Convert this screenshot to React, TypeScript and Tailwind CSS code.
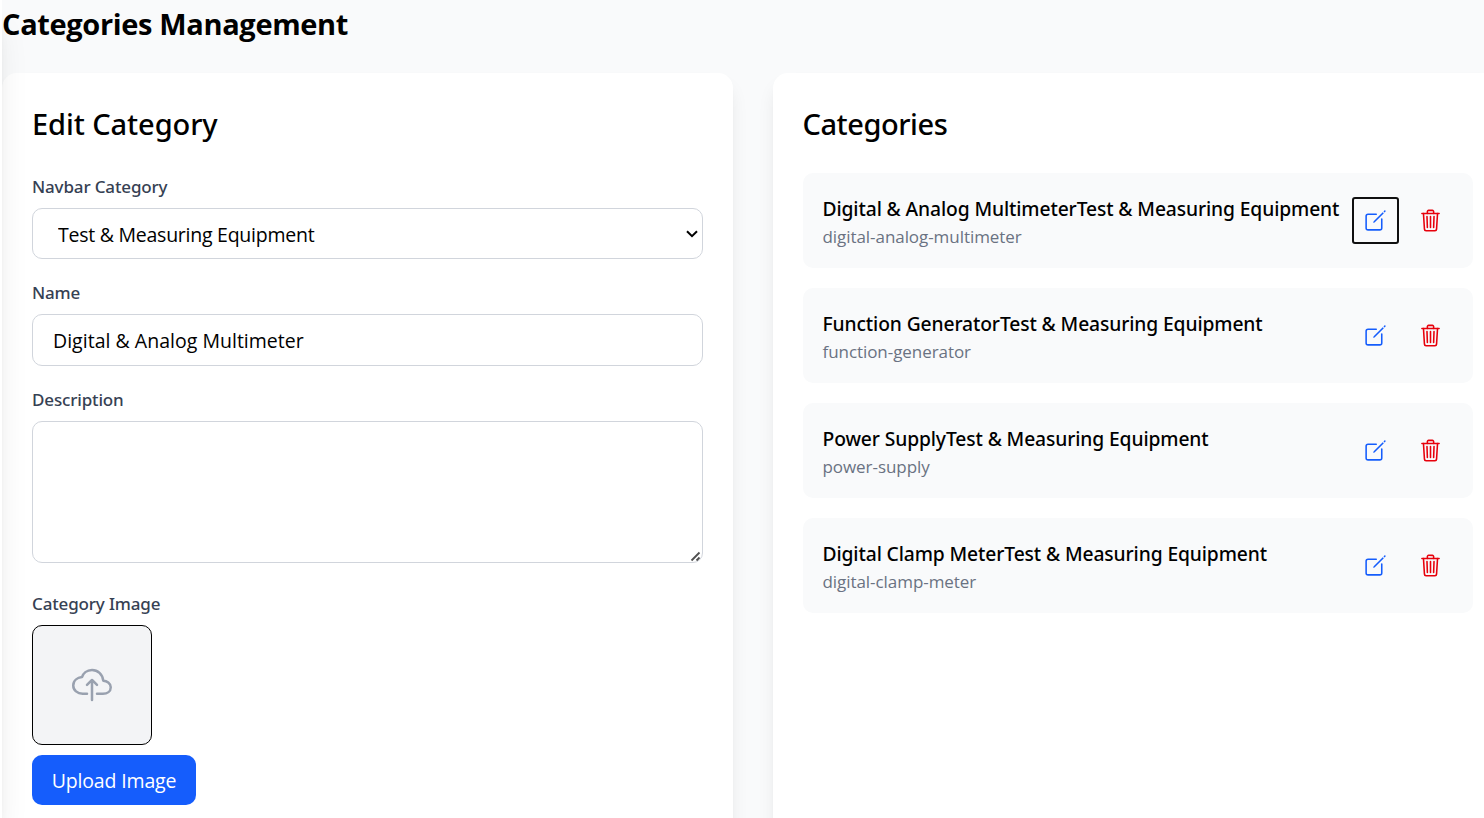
import { useState } from "react";
import { IoCloudUploadOutline, IoCreateOutline, IoTrashOutline } from "react-icons/io5";

const categories = [
  { name: "Digital & Analog Multimeter", parent: "Test & Measuring Equipment", slug: "digital-analog-multimeter" },
  { name: "Function Generator", parent: "Test & Measuring Equipment", slug: "function-generator" },
  { name: "Power Supply", parent: "Test & Measuring Equipment", slug: "power-supply" },
  { name: "Digital Clamp Meter", parent: "Test & Measuring Equipment", slug: "digital-clamp-meter" },
];

const card =
  "w-[730.5px] shrink-0 rounded-[15px] bg-white p-[30px] shadow-[0_12.5px_19px_-4px_rgba(0,0,0,0.1),0_5px_7.5px_-5px_rgba(0,0,0,0.1)]";
const label =
  "mb-[9px] block pt-px font-['Noto_Sans',sans-serif] text-[17px] leading-[25px] font-medium tracking-[-0.15px] text-[#364153]";
const field = "w-full rounded-[10px] border border-[#d1d5dc] bg-white text-[19.5px] leading-[30px] text-black outline-none";

function CategoryForm() {
  const [name, setName] = useState("Digital & Analog Multimeter");
  return (
    <section className={card}>
      <h2 className="mb-[29px] pt-px font-['Noto_Sans',sans-serif] text-[29px] leading-10 font-medium tracking-[-0.08px]">Edit Category</h2>
      <form className="flex flex-col">
        <div className="mb-5">
          <label className={label}>Navbar Category</label>
          <div className="relative h-[51px]">
            <select className={`${field} h-full appearance-none pt-[3px] pr-10 pl-[25px] tracking-[-0.25px]`}>
              <option>Test &amp; Measuring Equipment</option>
            </select>
            <svg className="pointer-events-none absolute top-[22px] right-[5px] h-2 w-3" viewBox="0 0 12 8" fill="none" stroke="black" strokeWidth="2">
              <path d="M1 1.2 6 6.2 11 1.2" />
            </svg>
          </div>
        </div>
        <div className="mb-5">
          <label className={label}>Name</label>
          <input
            className={`${field} block h-[52px] px-5 pt-px tracking-[0.02px]`}
            value={name}
            onChange={(e) => setName(e.target.value)}
          />
        </div>
        <div className="mb-[27px]">
          <label className={label}>Description</label>
          <div className="relative">
            <textarea className={`${field} block h-[142px] resize-none px-5 py-2.5`} />
            <svg className="pointer-events-none absolute right-[2px] bottom-[1px] h-[11px] w-[11px]" viewBox="0 0 11 11" stroke="#505050" strokeWidth="1.8">
              <path d="M1.5 9.5 9.5 1.5M6.5 9.5 9.5 6.5" />
            </svg>
          </div>
        </div>
        <div>
          <label className={label}>Category Image</label>
          <div className="mb-2.5 flex size-[120px] items-center justify-center rounded-[10px] border border-black bg-[#f3f4f6]">
            <IoCloudUploadOutline className="size-10 text-[#99a1af]" />
          </div>
          <button type="button" className="h-[50px] w-[164px] rounded-[10px] bg-[#155dfc] pt-px text-[19.5px] leading-[30px] tracking-[-0.15px] text-white">
            Upload Image
          </button>
        </div>
      </form>
    </section>
  );
}

function CategoryList() {
  return (
    <section className={card}>
      <h2 className="mb-[29px] pt-px font-['Noto_Sans',sans-serif] text-[29px] leading-10 font-medium tracking-[-0.45px]">Categories</h2>
      <ul className="flex flex-col gap-5">
        {categories.map((c, i) => (
          <li key={c.slug} className="flex h-[95px] items-center justify-between rounded-[10px] bg-[#f9fafb] p-5">
            <div className="pt-0.5 whitespace-nowrap">
              <h3 className="font-['Noto_Sans',sans-serif] text-[19.25px] leading-[30px] font-medium tracking-[-0.11px]">
                {c.name}
                {c.parent}
              </h3>
              <p className="text-[17px] leading-[25px] tracking-[-0.06px] text-[#6a7282]">{c.slug}</p>
            </div>
            <div className="flex gap-2.5">
              <button
                aria-label="Edit"
                className={`rounded-[2px] p-2.5 text-[#155dfc] ${i === 0 ? "outline-2 -outline-offset-1 outline-[#101010]" : ""}`}
              >
                <IoCreateOutline className="size-[25px]" />
              </button>
              <button aria-label="Delete" className="p-2.5 text-[#e7000b]">
                <IoTrashOutline className="size-[25px]" />
              </button>
            </div>
          </li>
        ))}
      </ul>
    </section>
  );
}

export default function App() {
  return (
    <div className="flex h-[818px] overflow-hidden bg-white font-['Open_Sans',sans-serif] text-black">
      <aside className="z-10 -ml-[318px] w-80 shrink-0 bg-white shadow-[0_25px_31px_-6px_rgba(0,0,0,0.1),0_10px_12.5px_-7.5px_rgba(0,0,0,0.1)]" />
      <main className="min-w-0 flex-1 bg-[#f9fafb]">
        <h1 className="relative z-20 mb-[29px] pt-1 text-[29px] leading-10 font-bold tracking-[-0.35px]">Categories Management</h1>
        <div className="flex h-[900px] gap-10">
          <CategoryForm />
          <CategoryList />
        </div>
      </main>
    </div>
  );
}
